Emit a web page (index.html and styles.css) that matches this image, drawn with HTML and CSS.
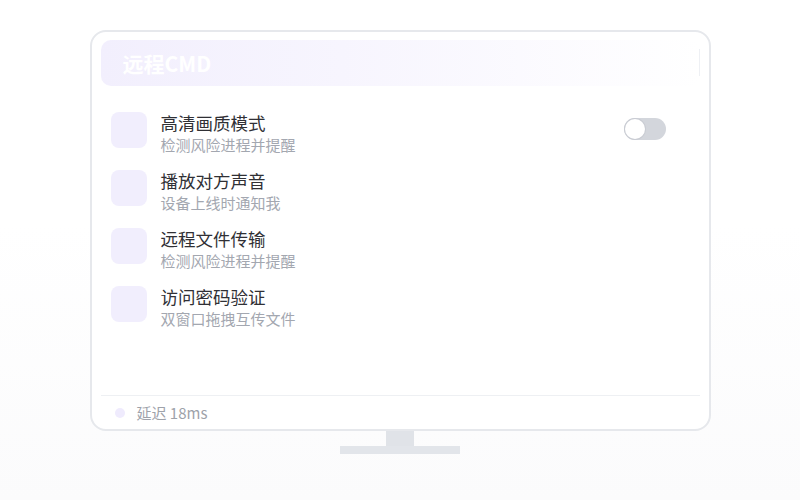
FILE: index.html
```html
<!DOCTYPE html>
<html lang="zh-CN">
<head>
<meta charset="utf-8">
<link rel="stylesheet" href="styles.css">
</head>
<body>
<div class="stage">
  <div class="monitor">
    <div class="header"><span class="header-title">远程CMD</span></div>
    <div class="list">
      <div class="row">
        <div class="icon"></div>
        <div class="texts">
          <div class="title">高清画质模式</div>
          <div class="sub">检测风险进程并提醒</div>
        </div>
        <div class="toggle"><span class="knob"></span></div>
      </div>
      <div class="row">
        <div class="icon"></div>
        <div class="texts">
          <div class="title">播放对方声音</div>
          <div class="sub">设备上线时通知我</div>
        </div>
      </div>
      <div class="row">
        <div class="icon"></div>
        <div class="texts">
          <div class="title">远程文件传输</div>
          <div class="sub">检测风险进程并提醒</div>
        </div>
      </div>
      <div class="row">
        <div class="icon"></div>
        <div class="texts">
          <div class="title">访问密码验证</div>
          <div class="sub">双窗口拖拽互传文件</div>
        </div>
      </div>
    </div>
    <div class="footer">
      <span class="dot"></span>
      <span class="latency">延迟 18ms</span>
    </div>
  </div>
  <div class="neck"></div>
  <div class="base"></div>
</div>
</body>
</html>
```
FILE: styles.css
```css
* { box-sizing: border-box; }
html, body { margin: 0; padding: 0; }
body {
  width: 800px;
  height: 500px;
  overflow: hidden;
  background: linear-gradient(to bottom, #ffffff 0%, #ffffff 45%, #fbfbfc 100%);
  font-family: "Noto Sans CJK SC", "Noto Sans", sans-serif;
}
.stage {
  padding-top: 30px;
  display: flex;
  flex-direction: column;
  align-items: center;
}
.monitor {
  width: 621px;
  height: 401px;
  border: 2px solid #e6e8ec;
  border-radius: 16px;
  background: #ffffff;
  padding: 8px 9px 0 9px;
  display: flex;
  flex-direction: column;
}
.header {
  position: relative;
  height: 46px;
  border-radius: 10px;
  background: linear-gradient(to right, #f2effd 0%, #f7f5fe 40%, #ffffff 100%);
  display: flex;
  align-items: center;
  padding-left: 22px;
}
.header::after {
  content: "";
  position: absolute;
  right: 0;
  top: 9px;
  bottom: 10px;
  width: 1px;
  background: #eef0f4;
}
.header-title {
  color: #ffffff;
  font-weight: 700;
  font-size: 21px;
  line-height: 28px;
}
.list {
  margin-top: 25px;
  padding: 0 34px 0 10px;
  display: flex;
  flex-direction: column;
  gap: 14px;
  flex: 1;
}
.row {
  display: flex;
  align-items: flex-start;
}
.icon {
  margin-top: 1px;
  width: 36px;
  height: 36px;
  border-radius: 8px;
  background: #f1eefd;
  flex: none;
}
.texts {
  margin-left: 14px;
  flex: 1;
}
.title {
  font-size: 17.5px;
  line-height: 24px;
  color: #303035;
}
.sub {
  font-size: 15px;
  line-height: 20px;
  color: #a3a7b0;
}
.toggle {
  margin-top: 7px;
  width: 42px;
  height: 22px;
  border-radius: 11px;
  background: #d3d6dc;
  padding: 1px;
  flex: none;
}
.knob {
  display: block;
  width: 20px;
  height: 20px;
  border-radius: 50%;
  background: #ffffff;
  box-shadow: 0 0 0 1px #c9ccd3;
}
.footer {
  height: 34px;
  border-top: 1px solid #eef0f3;
  display: flex;
  align-items: center;
  padding-left: 14px;
}
.dot {
  width: 10px;
  height: 10px;
  border-radius: 50%;
  background: #efebfd;
  margin-right: 12px;
}
.latency {
  font-size: 15px;
  color: #9ea2aa;
  line-height: 22px;
}
.neck {
  width: 28px;
  height: 15px;
  background: #e0e3e8;
}
.base {
  width: 120px;
  height: 8px;
  background: #e2e5ea;
}
```
